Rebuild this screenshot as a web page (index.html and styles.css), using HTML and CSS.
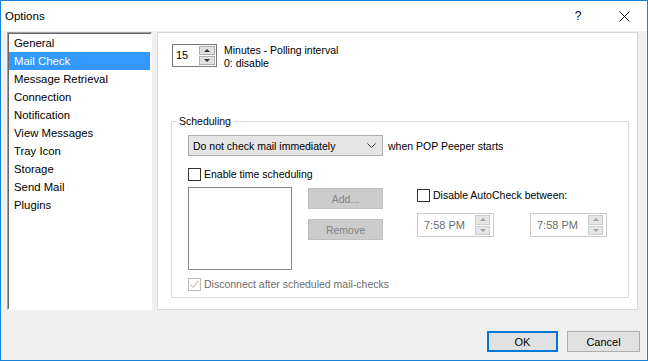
FILE: index.html
```html
<!DOCTYPE html>
<html lang="en">

<head>
    <meta charset="UTF-8">
    <meta name="viewport" content="width=device-width, initial-scale=1.0">
    <title>Options</title>
    <link rel="stylesheet" href="styles.css">
</head>

<body>
    <div class="window">
        <div class="titlebar">
            <span class="title">Options</span>
            <span class="caption-btn help">?</span>
            <span class="caption-btn close">
                <svg width="11" height="11" viewBox="0 0 11 11">
                    <path d="M0.5 0.5L10.5 10.5M10.5 0.5L0.5 10.5" stroke="#111" stroke-width="1" fill="none" />
                </svg>
            </span>
        </div>

        <div class="content">
            <div class="main">
                <ul class="pages">
                    <li>General</li>
                    <li class="selected">Mail Check</li>
                    <li>Message Retrieval</li>
                    <li>Connection</li>
                    <li>Notification</li>
                    <li>View Messages</li>
                    <li>Tray Icon</li>
                    <li>Storage</li>
                    <li>Send Mail</li>
                    <li>Plugins</li>
                </ul>

                <div class="panel">
                    <div class="interval">
                        <div class="spin">
                            <span class="spin-value">15</span>
                            <span class="spin-btns">
                                <span class="spin-btn up"></span>
                                <span class="spin-btn down"></span>
                            </span>
                        </div>
                        <div class="interval-text">
                            <div>Minutes - Polling interval</div>
                            <div>0: disable</div>
                        </div>
                    </div>

                    <div class="group">
                        <span class="legend">Scheduling</span>

                        <div class="startup">
                            <div class="combo">
                                <span>Do not check mail immediately</span>
                                <svg class="chevron" width="9" height="5" viewBox="0 0 9 5">
                                    <polyline points="0.5,0.5 4.5,4.5 8.5,0.5" stroke="#333" fill="none" />
                                </svg>
                            </div>
                            <span class="startup-label">when POP Peeper starts</span>
                        </div>

                        <label class="check enable-row"><span class="box"></span>Enable time scheduling</label>

                        <div class="sched">
                            <div class="times-list"></div>
                            <div class="sched-btns">
                                <button class="flat" disabled>Add...</button>
                                <button class="flat" disabled>Remove</button>
                            </div>
                            <div class="autocheck">
                                <label class="check"><span class="box"></span>Disable AutoCheck between:</label>
                                <div class="time-row">
                                    <div class="time">
                                        <span class="time-value">7:58 PM</span>
                                        <span class="spin-btns">
                                            <span class="spin-btn up"></span>
                                            <span class="spin-btn down"></span>
                                        </span>
                                    </div>
                                    <div class="time">
                                        <span class="time-value">7:58 PM</span>
                                        <span class="spin-btns">
                                            <span class="spin-btn up"></span>
                                            <span class="spin-btn down"></span>
                                        </span>
                                    </div>
                                </div>
                            </div>
                        </div>

                        <label class="check disabled disconnect-row">
                            <span class="box">
                                <svg width="11" height="11" viewBox="0 0 11 11">
                                    <polyline points="1.5,5.5 4,8.5 9.5,1.5" stroke="#b5b5b5" fill="none" />
                                </svg>
                            </span>Disconnect after scheduled mail-checks
                        </label>
                    </div>
                </div>
            </div>

            <div class="footer">
                <button class="btn default">OK</button>
                <button class="btn cancel">Cancel</button>
            </div>
        </div>
    </div>
</body>

</html>
```

FILE: styles.css
```css
body {
    margin: 0;
    padding: 0;
    font-family: "Liberation Sans", Arial, sans-serif;
    font-size: 10.5px;
    color: #000;
    background-color: #f0f0f0;
}

.window {
    width: 648px;
    height: 361px;
    box-sizing: border-box;
    border: 1px solid #1883d7;
    background-color: #f0f0f0;
    display: flex;
    flex-direction: column;
}

/* title bar */
.titlebar {
    height: 30px;
    background-color: #ffffff;
    display: flex;
    align-items: center;
}

.title {
    padding-left: 4px;
    font-size: 11.5px;
    flex: 1;
}

.caption-btn {
    width: 46px;
    height: 30px;
    display: flex;
    align-items: center;
    justify-content: center;
}

.help {
    font-size: 12px;
}

/* body */
.content {
    flex: 1;
    display: flex;
    flex-direction: column;
    padding: 1px 9px 0 6px;
}

.main {
    display: flex;
    gap: 5px;
    height: 278px;
}

.pages {
    list-style: none;
    margin: 0;
    width: 145px;
    box-sizing: border-box;
    padding: 1px;
    background-color: #ffffff;
    border: 1px solid;
    border-color: #a0a0a0 #ffffff #ffffff #a0a0a0;
    box-shadow: inset 1px 1px 0 #696969;
    font-size: 11.35px;
}

.pages li {
    height: 18px;
    line-height: 18px;
    padding-left: 5px;
}

.pages li.selected {
    background-color: #3399ff;
    color: #ffffff;
}

.panel {
    flex: 1;
    background-color: #ffffff;
    border: 1px solid #d9d9d9;
    padding: 11px 8px 0 14px;
    display: flex;
    flex-direction: column;
}

/* polling interval */
.interval {
    display: flex;
    align-items: flex-start;
}

.spin {
    width: 45px;
    height: 23px;
    box-sizing: border-box;
    border: 1px solid #7a7a7a;
    display: flex;
}

.spin-value {
    flex: 1;
    padding-left: 3px;
    line-height: 21px;
    font-size: 11px;
}

.spin-btns {
    display: flex;
    flex-direction: column;
    gap: 1px;
    margin: 1px;
    width: 16px;
}

.spin-btn {
    flex: 1;
    background-color: #e1e1e1;
    border: 1px solid #adadad;
    display: flex;
    align-items: center;
    justify-content: center;
}

.spin-btn::before {
    content: "";
    border-left: 3px solid transparent;
    border-right: 3px solid transparent;
}

.spin-btn.up::before {
    border-bottom: 3px solid #333;
}

.spin-btn.down::before {
    border-top: 3px solid #333;
}

.interval-text {
    margin-left: 7px;
    line-height: 13px;
}

/* scheduling group */
.group {
    margin: 51px 0 0 -1px;
    border: 1px solid #dcdcdc;
    padding: 0 16px 6px 16px;
    display: flex;
    flex-direction: column;
}

.legend {
    align-self: flex-start;
    margin: -7px 0 0 -11px;
    padding: 0 2px;
    line-height: 13px;
    background-color: #ffffff;
}

.startup {
    margin-top: 7px;
    display: flex;
    align-items: center;
}

.combo {
    width: 195px;
    height: 21px;
    box-sizing: border-box;
    border: 1px solid #adadad;
    background-color: #e5e5e5;
    padding: 0 6px 0 4px;
    display: flex;
    align-items: center;
    justify-content: space-between;
}

.startup-label {
    margin-left: 5px;
}

.check {
    display: flex;
    align-items: center;
    height: 13px;
    line-height: 13px;
}

.check .box {
    width: 13px;
    height: 13px;
    box-sizing: border-box;
    border: 1px solid #333333;
    background-color: #ffffff;
    margin-right: 3px;
    display: flex;
    align-items: center;
    justify-content: center;
}

.check.disabled {
    color: #6d6d6d;
}

.check.disabled .box {
    border-color: #bcbcbc;
}

.enable-row {
    margin-top: 12px;
}

.sched {
    margin-top: 6px;
    display: flex;
    align-items: flex-start;
}

.times-list {
    width: 104px;
    height: 83px;
    box-sizing: border-box;
    border: 1px solid #828790;
    background-color: #ffffff;
}

.sched-btns {
    margin-left: 16px;
    padding-top: 1px;
    display: flex;
    flex-direction: column;
    gap: 10px;
}

.flat {
    width: 75px;
    height: 21px;
    border: 1px solid #bfbfbf;
    background-color: #cccccc;
    color: #838383;
    font-family: inherit;
    font-size: 10.5px;
    padding: 0;
}

.autocheck {
    margin-left: 34px;
    padding-top: 2px;
}

.time-row {
    margin-top: 11px;
    display: flex;
    gap: 36px;
}

.time {
    width: 77px;
    height: 24px;
    box-sizing: border-box;
    border: 1px solid #cccccc;
    background-color: #ffffff;
    display: flex;
}

.time-value {
    flex: 1;
    padding-left: 6px;
    line-height: 22px;
    color: #6d6d6d;
    font-size: 11px;
}

.time .spin-btns {
    width: 15px;
    margin: 1px 3px 1px 0;
}

.time .spin-btn {
    background-color: #e6e6e6;
    border-color: #cccccc;
}

.time .spin-btn.up::before {
    border-bottom-color: #a0a0a0;
}

.time .spin-btn.down::before {
    border-top-color: #a0a0a0;
}

.disconnect-row {
    margin-top: 8px;
}

/* dialog buttons */
.footer {
    margin: 21px -2px 0 0;
    display: flex;
    justify-content: flex-end;
    gap: 9px;
}

.btn {
    height: 21px;
    background-color: #e1e1e1;
    border: 1px solid #adadad;
    font-family: inherit;
    font-size: 11px;
    color: #000;
    padding: 0;
}

.btn.default {
    width: 71px;
    border: 2px solid #0078d7;
}

.btn.cancel {
    width: 73px;
}
```
